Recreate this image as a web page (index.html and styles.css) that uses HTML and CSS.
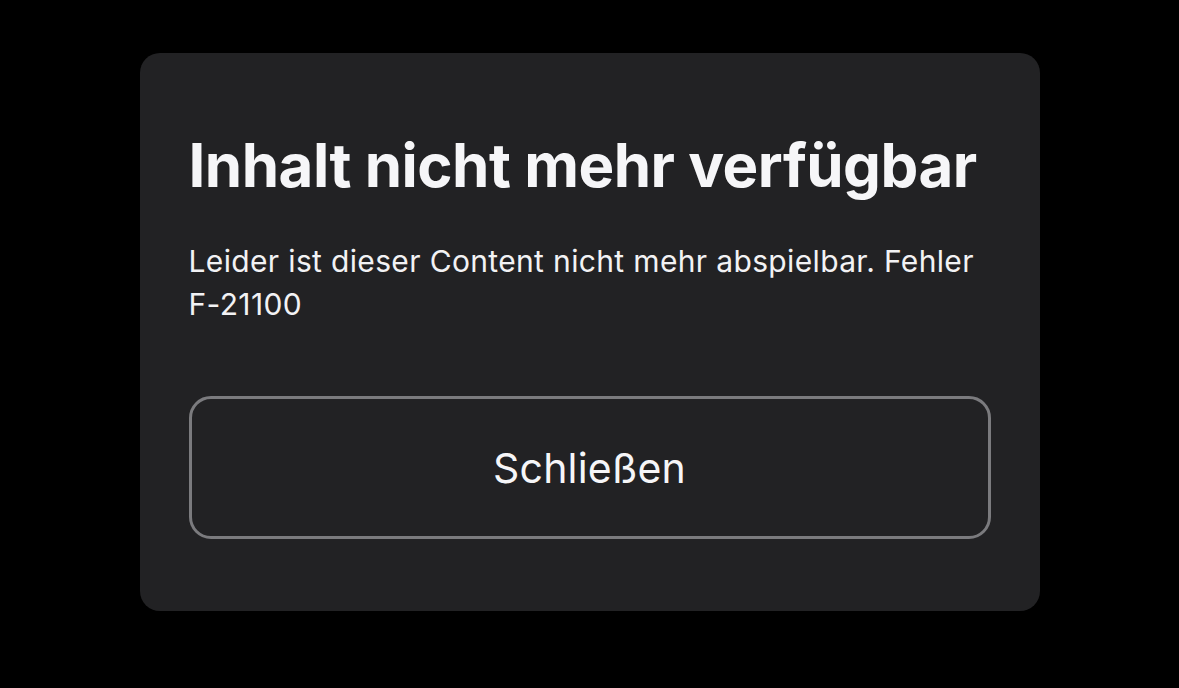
FILE: index.html
```html
<!DOCTYPE html>
<html lang="de">
<head>
    <meta charset="UTF-8">
    <meta name="viewport" content="width=device-width, initial-scale=1.0">
    <title>Inhalt nicht mehr verfügbar</title>
    <link rel="stylesheet" href="styles.css">
</head>
<body>
    <!-- Error dialog -->
    <div class="dialog">
        <h1 class="dialog-title">Inhalt nicht mehr verfügbar</h1>
        <p class="dialog-text">Leider ist dieser Content nicht mehr abspielbar. Fehler <span class="error-code">F-21100</span></p>
        <button class="dialog-button">Schließen</button>
    </div>
</body>
</html>
```

FILE: styles.css
```css
body {
    font-family: Inter, "Noto Sans", sans-serif;
    background-color: #000;
    margin: 0;
    padding: 0;
}
.dialog {
    width: 900px;
    box-sizing: border-box;
    margin: 53px auto 0;
    padding: 76px 49px 72px;
    background-color: #222224;
    border-radius: 20px;
    display: flex;
    flex-direction: column;
}
.dialog-title {
    margin: 0;
    color: #f6f6f8;
    font-size: 60px;
    font-weight: 700;
    line-height: 72px;
    letter-spacing: -0.5px;
    white-space: nowrap;
}
.dialog-text {
    margin: 39px 0 0;
    color: #f2f2f4;
    font-size: 30px;
    line-height: 43px;
    letter-spacing: 0.35px;
    max-width: 800px;
}
.error-code {
    white-space: nowrap;
}
.dialog-button {
    margin-top: 70px;
    height: 143px;
    background: transparent;
    border: 3px solid #7b7b7e;
    border-radius: 22px;
    color: #f6f6f8;
    font-family: inherit;
    font-size: 41px;
    letter-spacing: 0.2px;
    cursor: pointer;
}
```
